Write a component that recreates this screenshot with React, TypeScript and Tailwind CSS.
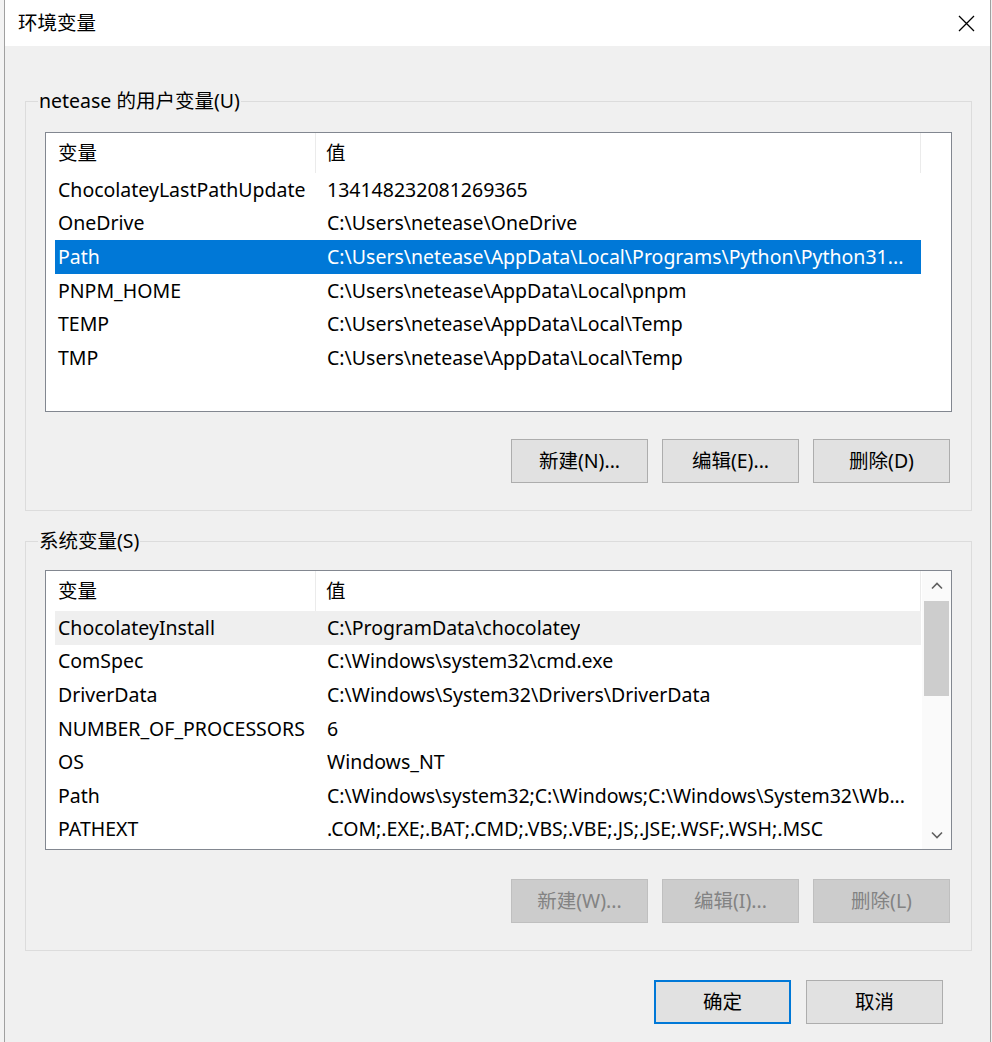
import type { ReactNode } from 'react';

type Row = { name: string; value: string };

const USER_VARS: Row[] = [
  { name: 'ChocolateyLastPathUpdate', value: '134148232081269365' },
  { name: 'OneDrive', value: 'C:\\Users\\netease\\OneDrive' },
  { name: 'Path', value: 'C:\\Users\\netease\\AppData\\Local\\Programs\\Python\\Python31...' },
  { name: 'PNPM_HOME', value: 'C:\\Users\\netease\\AppData\\Local\\pnpm' },
  { name: 'TEMP', value: 'C:\\Users\\netease\\AppData\\Local\\Temp' },
  { name: 'TMP', value: 'C:\\Users\\netease\\AppData\\Local\\Temp' },
];

const SYSTEM_VARS: Row[] = [
  { name: 'ChocolateyInstall', value: 'C:\\ProgramData\\chocolatey' },
  { name: 'ComSpec', value: 'C:\\Windows\\system32\\cmd.exe' },
  { name: 'DriverData', value: 'C:\\Windows\\System32\\Drivers\\DriverData' },
  { name: 'NUMBER_OF_PROCESSORS', value: '6' },
  { name: 'OS', value: 'Windows_NT' },
  { name: 'Path', value: 'C:\\Windows\\system32;C:\\Windows;C:\\Windows\\System32\\Wb...' },
  { name: 'PATHEXT', value: '.COM;.EXE;.BAT;.CMD;.VBS;.VBE;.JS;.JSE;.WSF;.WSH;.MSC' },
];

function Chevron({ down }: { down?: boolean }) {
  return (
    <svg width="12" height="8" viewBox="0 0 12 8" fill="none" stroke="#606060" strokeWidth={1.6}>
      {down ? <path d="M1 1.5 L6 6.5 L11 1.5" /> : <path d="M1 6.5 L6 1.5 L11 6.5" />}
    </svg>
  );
}

function Scrollbar() {
  return (
    <div className="flex w-[29px] shrink-0 flex-col bg-[#fafafa]">
      <div className="flex h-[29px] items-center justify-center"><Chevron /></div>
      <div className="mx-[2px] mt-[1px] h-[95px] bg-[#cdcdcd]" />
      <div className="flex-1" />
      <div className="flex h-[29px] items-center justify-center"><Chevron down /></div>
    </div>
  );
}

function VarList({ rows, selected, selectedCls, scroll }: { rows: Row[]; selected: number; selectedCls: string; scroll?: boolean }) {
  return (
    <div className="flex h-[280px] overflow-hidden border border-[#828790] bg-white">
      <div className="flex w-[876px] shrink-0 flex-col">
        <div className="flex h-[40px] shrink-0">
          <div className="flex w-[270px] items-center border-r border-[#ebebeb] pl-[12px] pb-[1px]">变量</div>
          <div className="flex w-[605px] items-center border-r border-[#ebebeb] pl-[10px] pb-[1px]">值</div>
        </div>
        {rows.map((r, i) => (
          <div
            key={r.name}
            className={`ml-[9px] flex h-[33.6px] w-[866px] shrink-0 items-center leading-[28px] ${i === selected ? selectedCls : ''}`}
          >
            <div className="w-[261px] shrink-0 overflow-hidden whitespace-nowrap pl-[3px]">{r.name}</div>
            <div className="overflow-hidden whitespace-nowrap pl-[11px]">{r.value}</div>
          </div>
        ))}
      </div>
      {scroll && <Scrollbar />}
    </div>
  );
}

function Btn({ children, disabled, primary }: { children: ReactNode; disabled?: boolean; primary?: boolean }) {
  const look = disabled
    ? 'bg-[#cccccc] border border-[#bfbfbf] text-[#838383]'
    : primary
      ? 'bg-[#e1e1e1] border-2 border-[#0078d7]'
      : 'bg-[#e1e1e1] border border-[#adadad]';
  return (
    <div className={`flex h-[44px] w-[137px] items-center justify-center pb-[1px] ${look}`}>{children}</div>
  );
}

function Group({ label, children }: { label: string; children: ReactNode }) {
  return (
    <fieldset className="m-0 border border-[#dcdcdc] p-0">
      <legend className="ml-[12px] px-[1px] leading-[26px]">{label}</legend>
      <div className="px-[19px] pb-[27px]">{children}</div>
    </fieldset>
  );
}

export default function App() {
  return (
    <div className="flex h-[1042px] w-[992px] overflow-hidden bg-[#f0f0f0] font-['Noto_Sans','Noto_Sans_CJK_SC',sans-serif] text-[19.5px] leading-none text-black">
      {/* window behind */}
      <div className="w-[4px] shrink-0 bg-[#f3f3f3]" />

      <div className="flex w-[987px] shrink-0 flex-col border-x border-[#a0a0a0]">
        {/* title bar */}
        <div className="flex h-[46px] shrink-0 items-center justify-between bg-white pl-[13px] pr-[15px]">
          <span className="pb-[1px]">环境变量</span>
          <svg width="17" height="17" viewBox="0 0 17 17" fill="none" stroke="#000" strokeWidth={1.3}>
            <path d="M1 1 L16 16 M16 1 L1 16" />
          </svg>
        </div>

        <div className="flex flex-1 flex-col bg-[#f0f0f0] pl-[20px] pr-[18px]">
          <div className="mt-[42px]">
            <Group label="netease 的用户变量(U)">
              <div className="pt-[18px]">
                <VarList rows={USER_VARS} selected={2} selectedCls="bg-[#0078d7] text-white" />
              </div>
              <div className="mt-[27px] flex justify-end gap-[14px] pr-[2px]">
                <Btn>新建(N)...</Btn>
                <Btn>编辑(E)...</Btn>
                <Btn>删除(D)</Btn>
              </div>
            </Group>
          </div>

          <div className="mt-[17px]">
            <Group label="系统变量(S)">
              <div className="pt-[16px]">
                <VarList rows={SYSTEM_VARS} selected={0} selectedCls="bg-[#efefef]" scroll />
              </div>
              <div className="mt-[29px] flex justify-end gap-[14px] pr-[2px]">
                <Btn disabled>新建(W)...</Btn>
                <Btn disabled>编辑(I)...</Btn>
                <Btn disabled>删除(L)</Btn>
              </div>
            </Group>
          </div>

          <div className="mt-[29px] flex justify-end gap-[15px] pr-[29px]">
            <Btn primary>确定</Btn>
            <Btn>取消</Btn>
          </div>
        </div>
      </div>

      <div className="w-[1px] shrink-0 bg-[#f0f0f0]" />
    </div>
  );
}
